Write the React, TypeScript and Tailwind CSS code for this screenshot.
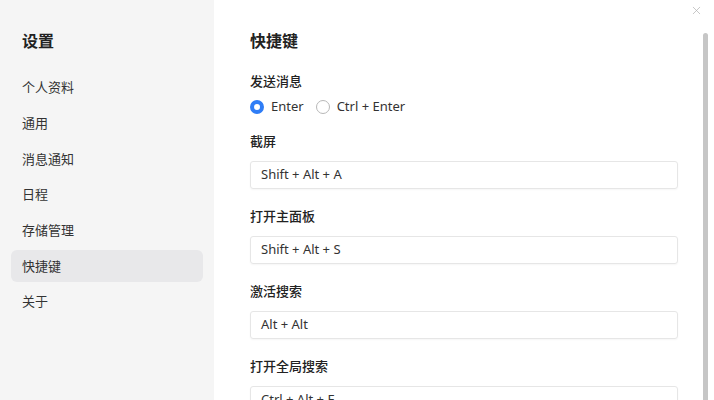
import { X } from 'lucide-react';

const menu = ['个人资料', '通用', '消息通知', '日程', '存储管理', '快捷键', '关于'];

const shortcuts = [
  { label: '截屏', keys: 'Shift + Alt + A' },
  { label: '打开主面板', keys: 'Shift + Alt + S' },
  { label: '激活搜索', keys: 'Alt + Alt' },
  { label: '打开全局搜索', keys: 'Ctrl + Alt + F' },
];

const Radio = ({ checked, label }: { checked?: boolean; label: string }) => (
  <label className="flex items-center gap-[7px]">
    {checked ? (
      <span className="w-[14px] h-[14px] rounded-full border-[4px] border-[#2f7df6] bg-white" />
    ) : (
      <span className="w-[14px] h-[14px] rounded-full border border-[#b8b8b8] bg-white" />
    )}
    <span className="text-[13px] text-[#333]">{label}</span>
  </label>
);

export default function App() {
  return (
    <div
      className="relative flex w-[714px] h-[400px] overflow-hidden bg-white"
      style={{ fontFamily: '"Noto Sans", "Noto Sans CJK SC", sans-serif' }}
    >
      {/* 侧边栏 */}
      <aside className="w-[214px] shrink-0 bg-[#f5f5f5] px-[11px] pt-[30px]">
        <h1 className="px-[11px] text-base leading-[22px] font-bold text-[#222]">设置</h1>
        <nav className="mt-[20px] flex flex-col gap-[3.67px]">
          {menu.map((item) => (
            <div
              key={item}
              className={`h-8 px-[11px] flex items-center rounded-md text-[13px] text-[#333] ${
                item === '快捷键' ? 'bg-[#e8e8ea]' : ''
              }`}
            >
              {item}
            </div>
          ))}
        </nav>
      </aside>

      {/* 内容 */}
      <main className="flex-1 px-9 pt-[30px]">
        <h2 className="text-base leading-[22px] font-bold text-[#222]">快捷键</h2>
        <p className="mt-[20px] text-[13px] leading-[18px] font-medium text-[#222]">发送消息</p>
        <div className="mt-[7px] h-5 flex items-center gap-[12px]">
          <Radio checked label="Enter" />
          <Radio label="Ctrl + Enter" />
        </div>
        <div className="mt-[15px] flex flex-col">
          {shortcuts.map((s) => (
            <div key={s.label} className="mb-[18px]">
              <p className="text-[13px] leading-[18px] font-medium text-[#222]">{s.label}</p>
              <div className="mt-[11px] h-[28px] px-[10px] flex items-center rounded-[3px] border border-[#e6e6e6] shadow-[0_1px_2px_rgba(0,0,0,0.04)] text-[13px] text-[#333]">
                {s.keys}
              </div>
            </div>
          ))}
        </div>
      </main>

      {/* 关闭按钮 */}
      <button className="absolute right-[11px] top-[4px] text-[#b0b0b0]">
        <X size={13} strokeWidth={1.3} />
      </button>

      {/* 滚动条 */}
      <div className="absolute left-[703px] top-[33px] w-[5px] h-[380px] rounded-full bg-[#c6c6c6]" />
    </div>
  );
}
